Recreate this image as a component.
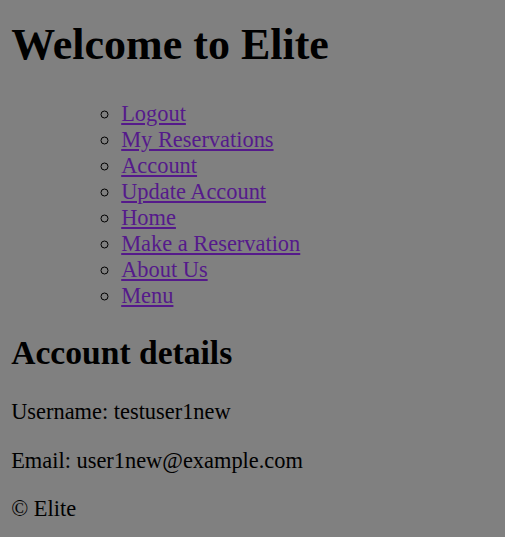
import React from 'react';

const links = [
  'Logout',
  'My Reservations',
  'Account',
  'Update Account',
  'Home',
  'Make a Reservation',
  'About Us',
  'Menu',
];

export default function App() {
  return (
    <div className="min-h-screen bg-[#808080] flow-root px-[11.2px] text-black text-[22.4px] leading-[normal] font-['Liberation_Serif',serif]">
      <h1 className="mt-[19px] mb-[31px] text-[44px] font-bold leading-[normal]">Welcome to Elite</h1>
      <ul className="mt-[31px] pl-[110px] list-[circle]">
        {links.map((l) => (
          <li key={l}>
            <a href="#" className="text-[#551A8B] underline">
              {l}
            </a>
          </li>
        ))}
      </ul>
      <h2 className="mt-[25px] mb-[27px] text-[33.6px] font-bold leading-[normal]">Account details</h2>
      <p className="mb-[23.4px]">Username: testuser1new</p>
      <p className="mb-[22px]">Email: user1new@example.com</p>
      <p>© Elite</p>
    </div>
  );
}
